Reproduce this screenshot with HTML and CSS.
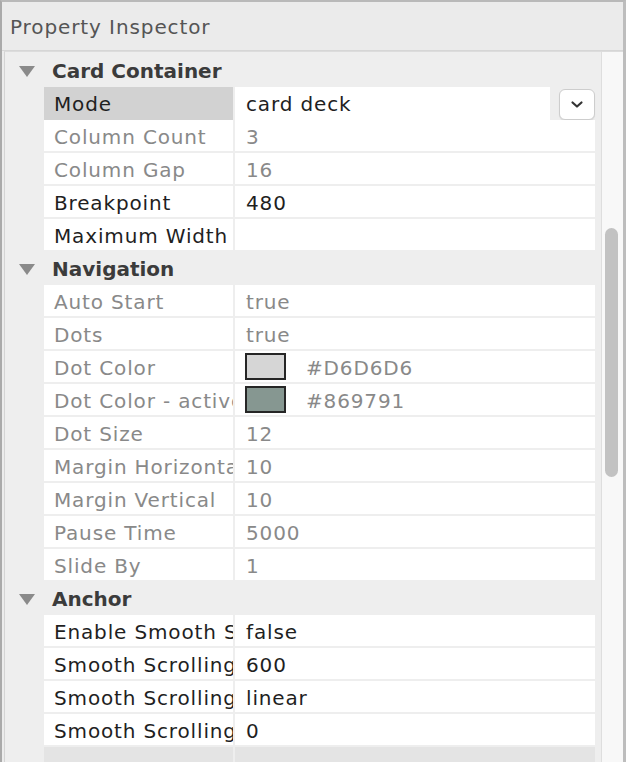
FILE: index.html
```html
<!DOCTYPE html>
<html>
<head>
<meta charset="utf-8">
<link rel="stylesheet" href="styles.css">
</head>
<body>
<div class="window">
  <div class="titlebar">Property Inspector</div>
  <div class="panel">
    <div class="list">
      <div class="header"><span class="tri"></span><span class="htext">Card Container</span></div>
      <div class="row on selected"><div class="label">Mode</div><div class="value select"><span class="field">card deck</span><span class="btn"><svg width="14" height="9" viewBox="0 0 14 9"><path d="M2.5 2.5 L7 6.5 L11.5 2.5" fill="none" stroke="#333333" stroke-width="2.2" stroke-linecap="round" stroke-linejoin="round"/></svg></span></div></div>
      <div class="row off"><div class="label">Column Count</div><div class="value">3</div></div>
      <div class="row off"><div class="label">Column Gap</div><div class="value">16</div></div>
      <div class="row on"><div class="label">Breakpoint</div><div class="value">480</div></div>
      <div class="row on"><div class="label">Maximum Width</div><div class="value"></div></div>

      <div class="header"><span class="tri"></span><span class="htext">Navigation</span></div>
      <div class="row off"><div class="label">Auto Start</div><div class="value">true</div></div>
      <div class="row off"><div class="label">Dots</div><div class="value">true</div></div>
      <div class="row off"><div class="label">Dot Color</div><div class="value color"><span class="swatch sw-light"></span><span>#D6D6D6</span></div></div>
      <div class="row off"><div class="label">Dot Color - active</div><div class="value color"><span class="swatch sw-dark"></span><span>#869791</span></div></div>
      <div class="row off"><div class="label">Dot Size</div><div class="value">12</div></div>
      <div class="row off"><div class="label">Margin Horizontal</div><div class="value">10</div></div>
      <div class="row off"><div class="label">Margin Vertical</div><div class="value">10</div></div>
      <div class="row off"><div class="label">Pause Time</div><div class="value">5000</div></div>
      <div class="row off"><div class="label">Slide By</div><div class="value">1</div></div>

      <div class="header"><span class="tri"></span><span class="htext">Anchor</span></div>
      <div class="row on"><div class="label">Enable Smooth Scrolling</div><div class="value">false</div></div>
      <div class="row on"><div class="label">Smooth Scrolling Duration</div><div class="value">600</div></div>
      <div class="row on"><div class="label">Smooth Scrolling Easing</div><div class="value">linear</div></div>
      <div class="row on"><div class="label">Smooth Scrolling Offset</div><div class="value">0</div></div>
      <div class="row partial"><div class="label"></div><div class="value"></div></div>
    </div>
    <div class="scrollbar"><div class="thumb"></div></div>
  </div>
</div>
</body>
</html>
```

FILE: styles.css
```css
html, body {
  margin: 0;
  padding: 0;
  background: #ececec;
}
body {
  width: 626px;
  height: 762px;
  overflow: hidden;
  font-family: "DejaVu Sans", "Liberation Sans", sans-serif;
}
.window {
  box-sizing: border-box;
  width: 626px;
  height: 762px;
  border-top: 2px solid #b9b9b9;
  border-left: 2px solid #aaaaaa;
  border-right: 3px solid #bdbdbd;
  background: #ececec;
  display: flex;
  flex-direction: column;
}
.titlebar {
  height: 48px;
  line-height: 50px;
  padding-left: 8px;
  font-size: 20px;
  letter-spacing: 0.9px;
  color: #555555;
  background: #ebebeb;
  border-bottom: 1px solid #d6d6d6;
}
.panel {
  flex: 1;
  min-height: 0;
  margin-left: 2px;
  border-left: 1px solid #d4d4d4;
  border-top: 1px solid #dcdcdc;
  display: flex;
  background: #eeeeee;
  overflow: hidden;
}
.list {
  flex: 1;
  padding-top: 2px;
  padding-right: 6px;
}
.header {
  height: 33px;
  display: flex;
  align-items: center;
}
.tri {
  width: 0;
  height: 0;
  margin-left: 14px;
  border-left: 8px solid transparent;
  border-right: 8px solid transparent;
  border-top: 11px solid #8a8a8a;
  margin-top: 1px;
}
.htext {
  margin-left: 17px;
  font-size: 20px;
  font-weight: bold;
  color: #3b3b3b;
}
.row {
  margin-left: 39px;
  height: 31px;
  margin-bottom: 2px;
  display: grid;
  grid-template-columns: 189px 1fr;
  column-gap: 2px;
  font-size: 20px;
  letter-spacing: 0.85px;
  line-height: 34px;
}
.label, .value {
  background: #ffffff;
  white-space: nowrap;
  overflow: hidden;
  text-overflow: clip;
}
.label { padding-left: 10px; }
.value { padding-left: 11px; }
.off { color: #898989; }
.on { color: #1f1f1f; }
.selected .label { background: #d2d2d2; }
.value.select {
  background: transparent;
  padding-left: 0;
  display: flex;
  overflow: visible;
}
.field {
  flex: 1;
  background: #ffffff;
  padding-left: 11px;
}
.btn {
  box-sizing: border-box;
  width: 36px;
  height: 31px;
  margin-left: 9px;
  margin-top: 2px;
  border: 1px solid #cdcdcd;
  border-radius: 6px;
  background: #ffffff;
  box-shadow: 0 1px 1px rgba(0,0,0,0.08);
  display: flex;
  align-items: center;
  justify-content: center;
}
.value.color {
  display: flex;
  align-items: center;
  padding-left: 10px;
}
.value.color span:last-child { padding-top: 3px; line-height: 28px; }
.swatch {
  box-sizing: border-box;
  width: 41px;
  height: 27px;
  border: 2px solid #262626;
  margin-right: 20px;
}
.sw-light { background: #D6D6D6; }
.sw-dark { background: #869791; }
.partial .label, .partial .value { background: #e4e4e4; }
.scrollbar {
  width: 21px;
  border-left: 1px solid #dedede;
  background: #f8f8f8;
  position: relative;
}
.thumb {
  position: absolute;
  left: 3px;
  top: 176px;
  width: 13px;
  height: 249px;
  border-radius: 7px;
  background: #c2c2c2;
}
```
